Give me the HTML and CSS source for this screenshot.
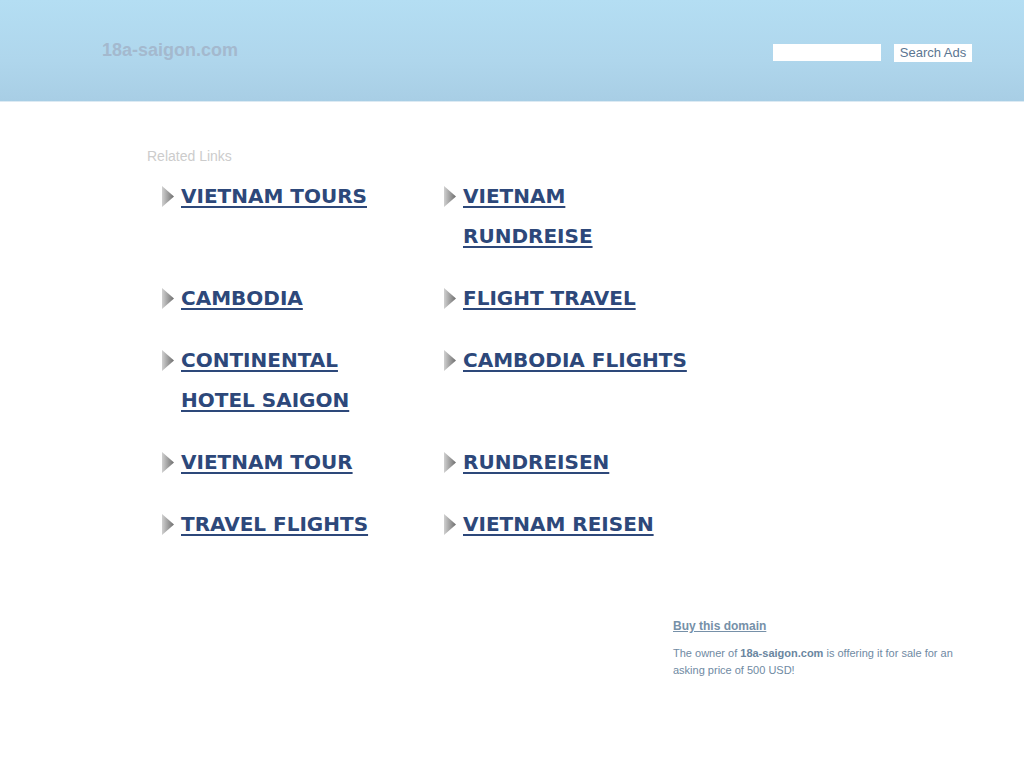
FILE: index.html
```html
<!DOCTYPE html>
<html>
<head>
<meta charset="utf-8">
<link rel="stylesheet" href="styles.css">
</head>
<body>
<header class="header">
  <div class="header-inner">
    <div class="logo">18a-saigon.com</div>
    <form class="search">
      <input class="search-input" type="text">
      <button class="search-btn" type="button">Search Ads</button>
    </form>
  </div>
</header>
<main class="main">
  <div class="related-title">Related Links</div>
  <ul class="links">
    <li><span class="arrow"></span><a href="#">VIETNAM TOURS</a></li>
    <li><span class="arrow"></span><a href="#">VIETNAM RUNDREISE</a></li>
    <li><span class="arrow"></span><a href="#">CAMBODIA</a></li>
    <li><span class="arrow"></span><a href="#">FLIGHT TRAVEL</a></li>
    <li><span class="arrow"></span><a href="#">CONTINENTAL HOTEL SAIGON</a></li>
    <li><span class="arrow"></span><a href="#">CAMBODIA FLIGHTS</a></li>
    <li><span class="arrow"></span><a href="#">VIETNAM TOUR</a></li>
    <li><span class="arrow"></span><a href="#">RUNDREISEN</a></li>
    <li><span class="arrow"></span><a href="#">TRAVEL FLIGHTS</a></li>
    <li><span class="arrow"></span><a href="#">VIETNAM REISEN</a></li>
  </ul>
  <div class="sale">
    <a class="buy" href="#">Buy this domain</a>
    <p class="sale-text">The owner of <b>18a-saigon.com</b> is offering it for sale for an asking price of 500 USD!</p>
  </div>
</main>
</body>
</html>
```

FILE: styles.css
```css
html, body {
  margin: 0;
  padding: 0;
  background: #ffffff;
  font-family: "Liberation Sans", Arial, sans-serif;
}
.header {
  height: 101px;
  background: linear-gradient(to bottom, #b4def3 0%, #afd6ec 60%, #a8cee5 100%);
  border-bottom: 1px solid #dceaf3;
}
.header-inner {
  display: flex;
  justify-content: space-between;
  padding: 40px 52px 0 102px;
}
.logo {
  font-size: 18px;
  font-weight: bold;
  color: #a4b9ce;
  line-height: 20px;
}
.search {
  display: flex;
  align-items: flex-start;
  gap: 13px;
  padding-top: 4px;
}
.search-input {
  width: 108px;
  height: 17px;
  border: none;
  padding: 0;
  margin: 0;
  background: #fff;
}
.search-btn {
  width: 78px;
  height: 18px;
  border: none;
  padding: 0;
  margin: 0;
  background: #fff;
  color: #5b7692;
  font-family: "Liberation Sans", Arial, sans-serif;
  font-size: 13px;
  line-height: 18px;
}
.main {
  padding: 46px 0 0 147px;
}
.related-title {
  font-size: 14px;
  color: #cccccc;
  line-height: 16px;
}
.links {
  list-style: none;
  margin: 12px 0 0 15px;
  padding: 0;
  display: grid;
  grid-template-columns: 282px 282px;
  row-gap: 22px;
  width: 564px;
}
.links li {
  display: flex;
  align-items: flex-start;
  width: 230px;
}
.links li:nth-child(even) {
  width: 251px;
}
.arrow {
  flex: none;
  width: 12px;
  height: 21px;
  margin-top: 10px;
  margin-right: 7px;
  background: linear-gradient(to right, #d0d0d0, #6e6e6e);
  clip-path: polygon(0 0, 100% 50%, 0 100%);
}
.links a {
  font-family: "DejaVu Sans", Verdana, sans-serif;
  font-weight: bold;
  font-size: 20px;
  line-height: 40px;
  color: #2d487a;
  text-decoration: underline;
  text-decoration-thickness: 2px;
  text-underline-offset: 3px;
}
.sale {
  margin: 72px 0 0 526px;
  width: 290px;
}
.buy {
  font-size: 12px;
  font-weight: bold;
  color: #7690a8;
  text-decoration: underline;
  line-height: 16px;
}
.sale-text {
  margin: 11px 0 0;
  font-size: 11px;
  line-height: 17px;
  color: #6f8aa3;
}
.sale-text b {
  color: #6a86a0;
}
```
